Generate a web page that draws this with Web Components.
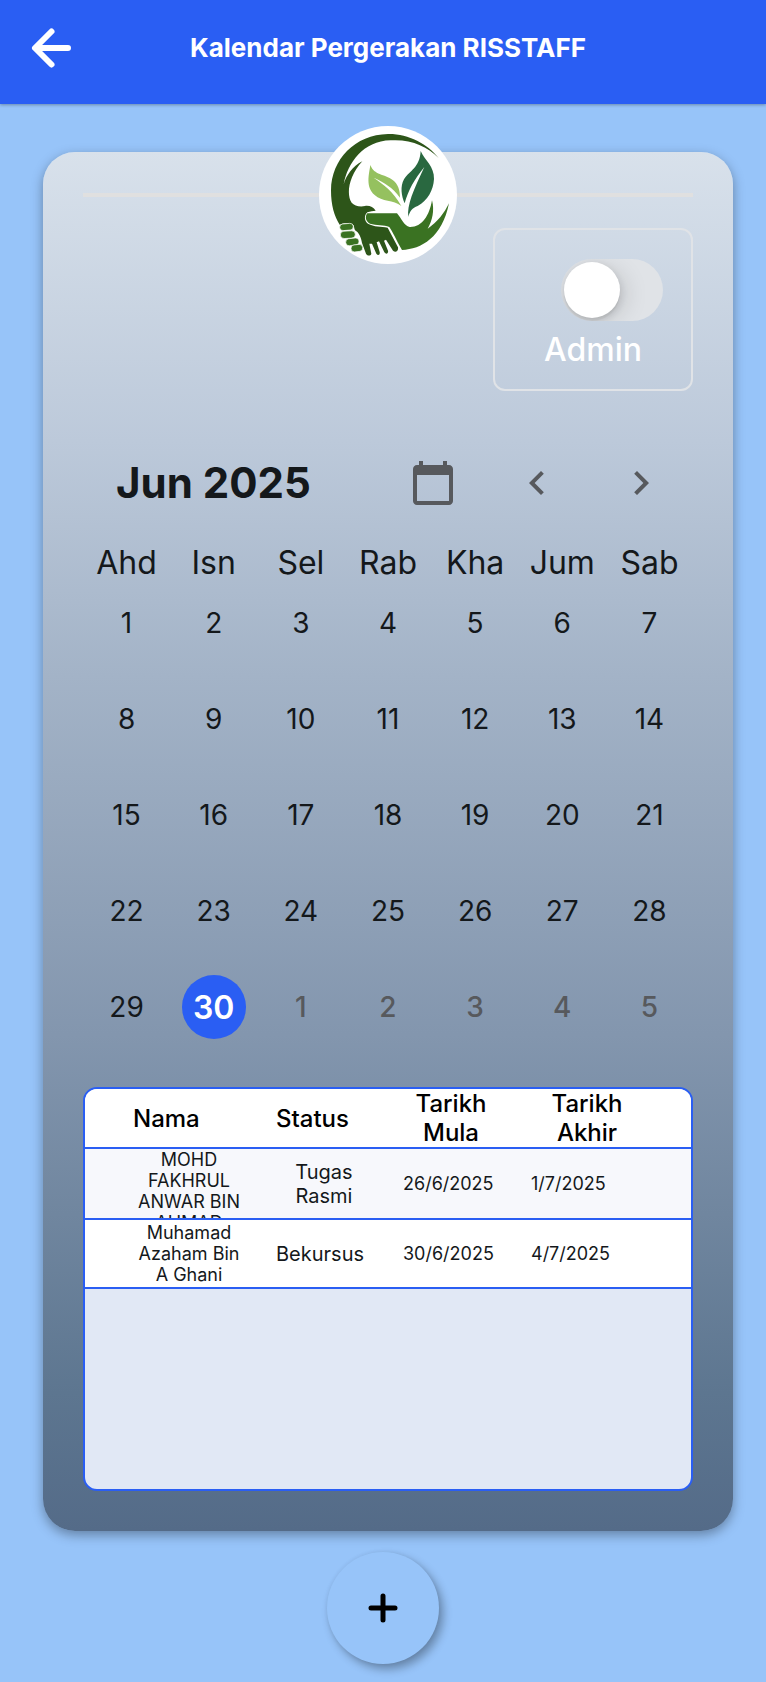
<!DOCTYPE html>
<html lang="ms">
<head>
<meta charset="utf-8">
<meta name="viewport" content="width=device-width, initial-scale=1">
<title>Kalendar Pergerakan RISSTAFF</title>
<style>
  :root {
    --primary: #2a5ef3;
    --sky: #97c4f9;
    --line: #e0e3e7;
    --ink: #14181b;
    --muted: #57595d;
  }
  body {
    margin: 0;
    min-height: 100vh;
    background: var(--sky);
    color: var(--ink);
    font-family: Inter, "Liberation Sans", sans-serif;
  }
</style>
</head>
<body>
<movement-page></movement-page>

<script>
const define = (name, html, setup) => {
  const template = document.createElement('template');
  template.innerHTML = html;
  customElements.define(name, class extends HTMLElement {
    constructor() {
      super();
      this.attachShadow({ mode: 'open' }).append(template.content.cloneNode(true));
    }
    connectedCallback() {
      if (setup) setup(this, this.shadowRoot);
    }
  });
};

define('top-bar', `
  <style>
    :host { display: block; background: var(--primary); box-shadow: 0 1px 3px rgba(0,0,0,.3); }
    header { display: grid; grid-template-columns: 72px 1fr 62px; align-items: center; height: 104px; padding: 0 16px 8px; box-sizing: border-box; }
    button { width: 72px; height: 72px; padding: 0; border: 0; background: none; display: grid; place-items: center; cursor: pointer; }
    h1 { margin: 0; text-align: center; color: #fff; font-size: 26px; line-height: 32px; font-weight: 700; }
  </style>
  <header>
    <button aria-label="Kembali">
      <svg width="44" height="44" viewBox="0 0 44 44" fill="none" stroke="#fff" stroke-width="6" stroke-linecap="round" stroke-linejoin="round"><path d="M38 22H6M21.500 5.500 5 22l16.500 16.500"/></svg>
    </button>
    <h1><slot></slot></h1>
  </header>`);

define('brand-logo', `
  <style>
    :host { display: flex; align-items: center; }
    i { flex: 1; height: 4px; background: #e0e0e0; }
    svg { display: block; flex: none; }
  </style>
  <i></i>
  <svg width="138" height="138" viewBox="57 47 414 414" role="img" aria-label="Logo">
    <circle cx="264" cy="254" r="207" fill="#fff"/>
    <path fill="#2d5519" d="M416 143C382 100 325 70 264 71C165 73 94 147 93 240C93 285 103 318 119 343C135 336 154 339 161 345C163 350 162 354 165 360C177 366 183 381 186 398L198 430C202 438 213 437 214 430L208 400L216 400L229 430C234 437 241 434 239 425L230 396L237 393L253 426C259 434 266 429 264 421L252 391L258 388L279 421C287 429 296 422 294 411L263 352C243 348 222 350 204 340C192 331 192 315 202 306C211 302 219 303 227 301C220 291 209 285 195 287C179 291 163 286 155 277C138 253 146 197 187 153C157 168 138 197 131 222C143 158 189 92 272 90C333 86 382 108 416 143Z"/>
    <path fill="#3a7222" d="M202 309C194 319 197 334 210 340C229 346 252 342 268 350C278 364 287 386 306 419C364 417 427 381 447 279C433 308 412 336 383 355C397 331 404 301 396 270C388 316 366 351 329 350C312 347 304 324 291 309Z"/>
    <g fill="#3a7222" stroke="#fff" stroke-width="2">
      <rect x="119" y="340" width="41" height="20" rx="10" transform="rotate(-5 139 350)"/>
      <rect x="121" y="362" width="45" height="22" rx="11" transform="rotate(-3 143 373)"/>
      <rect x="137" y="384" width="40" height="21" rx="10" transform="rotate(-7 157 394)"/>
      <rect x="153" y="403" width="35" height="21" rx="10" transform="rotate(-6 170 413)"/>
    </g>
    <path fill="#95c15f" d="M211 164C223 196 252 189 279 210C294 221 300 240 300 262C277 230 253 217 221 202C250 223 279 241 304 287C280 268 246 275 224 254C196 230 207 192 211 164Z"/>
    <path fill="#296840" d="M362 122C375 151 403 168 402 206C400 240 383 271 353 287C337 293 329 303 325 320C320 285 341 238 373 170C342 208 325 240 314 279C304 257 300 228 312 207C329 180 359 173 362 122Z"/>
  </svg>
  <i></i>`);

define('admin-toggle', `
  <style>
    :host { display: block; width: 200px; box-sizing: border-box; border: 2px solid var(--line); border-radius: 12px; padding: 29px 28px 19px; }
    label { display: grid; gap: 9px; color: #fff; font-size: 32px; line-height: 40px; font-weight: 500; text-align: center; }
    input { appearance: none; box-sizing: border-box; margin: 0; justify-self: end; width: 102px; height: 62px; border-radius: 31px; background: var(--line); padding: 3px; display: flex; overflow: hidden; }
    input::before { content: ""; width: 56px; height: 56px; border-radius: 50%; background: #fff; box-shadow: 0 3px 8px rgba(0,0,0,.15), 8px 4px 22px rgba(0,0,0,.1), 0 3px 1px rgba(0,0,0,.04); }
    input:checked { justify-content: flex-end; background: var(--primary); }
    span { display: block; }
  </style>
  <label><input type="checkbox" role="switch"><span><slot></slot></span></label>`);

define('month-calendar', `
  <style>
    :host { display: block; }
    button { font: inherit; color: inherit; padding: 0; border: 0; background: none; cursor: pointer; }
    .head { display: flex; align-items: center; height: 48px; padding: 0 28px 0 33px; }
    h2 { flex: 1; margin: 0; font-size: 42px; line-height: 48px; font-weight: 700; white-space: nowrap; }
    .tools { display: flex; gap: 56px; color: var(--muted); }
    .tools button, svg { display: block; width: 48px; height: 48px; }
    .grid { display: grid; grid-template-columns: repeat(7, 1fr); justify-items: center; }
    .names { margin-top: 37px; font-size: 32px; line-height: 38px; }
    .days { margin-top: 9px; row-gap: 32px; font-size: 28px; }
    .days button { width: 64px; height: 64px; border-radius: 50%; }
    .days .today { background: var(--primary); color: #fff; font-size: 32px; font-weight: 600; }
    .days .next { color: var(--muted); font-weight: 500; }
  </style>
  <div class="head">
    <h2>Jun 2025</h2>
    <div class="tools">
      <button aria-label="Hari ini"><svg viewBox="0 0 24 24" fill="currentColor"><path d="M20 3h-1V1h-2v2H7V1H5v2H4c-1.100 0-2 .9-2 2v16c0 1.100.9 2 2 2h16c1.100 0 2-.9 2-2V5c0-1.100-.9-2-2-2zm0 18H4V8h16v13z"/></svg></button>
      <button aria-label="Bulan sebelum"><svg viewBox="0 0 24 24" fill="currentColor"><path d="M15.410 7.410 14 6l-6 6 6 6 1.410-1.410L10.830 12z"/></svg></button>
      <button aria-label="Bulan berikut"><svg viewBox="0 0 24 24" fill="currentColor"><path d="M10 6 8.590 7.410 13.170 12l-4.580 4.590L10 18l6-6z"/></svg></button>
    </div>
  </div>
  <div class="grid names"></div>
  <div class="grid days"></div>`,
  (host, root) => {
    const add = (parent, tag, text, cls) => {
      const el = document.createElement(tag);
      el.textContent = text;
      if (cls) el.className = cls;
      root.querySelector(parent).append(el);
    };
    ['Ahd', 'Isn', 'Sel', 'Rab', 'Kha', 'Jum', 'Sab'].forEach(n => add('.names', 'span', n));
    for (let d = 1; d <= 30; d++) add('.days', 'button', d, d === 30 ? 'today' : '');
    for (let d = 1; d <= 5; d++) add('.days', 'button', d, 'next');
  });

define('movement-table', `
  <style>
    :host { display: block; box-sizing: border-box; min-height: 404px; border: 2px solid var(--primary); border-radius: 14px; background: #e1e8f5; overflow: hidden; }
    table { width: 100%; table-layout: fixed; border-spacing: 0; }
    col.name { width: 191px; } col.status { width: 127px; } col.start { width: 128px; }
    th, td { padding: 0; border-bottom: 2px solid var(--primary); font-weight: 400; background: #fff; }
    .odd td { background: #f7f8fc; }
    .box { display: flex; align-items: safe center; overflow: hidden; height: 67px; }
    .odd .box { height: 69px; }
    th .box { height: 58px; }
    span { text-align: center; font-size: 18px; line-height: 21px; max-width: 102px; }
    th span { color: #000; font-size: 24px; line-height: 29px; font-weight: 500; max-width: 96px; }
    th:last-child span { max-width: 112px; }
    td .status { font-size: 20px; line-height: 24px; max-width: 96px; }
    th:first-child .box { padding-left: 48px; }
    td:first-child .box { padding-left: 53px; }
  </style>
  <table>
    <colgroup><col class="name"><col class="status"><col class="start"><col></colgroup>
    <thead><tr>
      <th><div class="box"><span>Nama</span></div></th>
      <th><div class="box"><span>Status</span></div></th>
      <th><div class="box"><span>Tarikh Mula</span></div></th>
      <th><div class="box"><span>Tarikh Akhir</span></div></th>
    </tr></thead>
    <tbody>
      <tr class="odd">
        <td><div class="box"><span>MOHD FAKHRUL ANWAR BIN AHMAD</span></div></td>
        <td><div class="box"><span class="status">Tugas Rasmi</span></div></td>
        <td><div class="box"><span>26/6/2025</span></div></td>
        <td><div class="box"><span>1/7/2025</span></div></td>
      </tr>
      <tr>
        <td><div class="box"><span>Muhamad Azaham Bin A Ghani</span></div></td>
        <td><div class="box"><span class="status">Bekursus</span></div></td>
        <td><div class="box"><span>30/6/2025</span></div></td>
        <td><div class="box"><span>4/7/2025</span></div></td>
      </tr>
    </tbody>
  </table>`);

define('add-button', `
  <style>
    :host { display: block; width: 112px; height: 112px; }
    button { width: 112px; height: 112px; padding: 0; border: 0; border-radius: 50%; background: var(--sky); box-shadow: 4px 5px 10px rgba(0,0,0,.32), 0 0 4px rgba(0,0,0,.06); display: grid; place-items: center; cursor: pointer; }
  </style>
  <button aria-label="Tambah"><svg width="30" height="30" viewBox="0 0 30 30" stroke="#000" stroke-width="5" stroke-linecap="round"><path d="M15 3v24M3 15h24"/></svg></button>`);

define('movement-page', `
  <style>
    :host { display: block; }
    main { margin: 48px 33px 0 43px; padding: 0 40px 40px; border-radius: 32px; display: flow-root;
      background: linear-gradient(#d8e1eb, #bcc9da 21%, #a3b3c7 38%, #8396ae 64%, #5d7690 90%, #546b88);
      box-shadow: 0 4px 12px rgba(0,0,0,.34); }
    brand-logo { margin-top: -26px; }
    admin-toggle { margin: -36px 0 0 auto; }
    month-calendar { margin-top: 68px; }
    movement-table { margin-top: 48px; }
    add-button { margin: 21px auto 18px; }
  </style>
  <top-bar>Kalendar Pergerakan RISSTAFF</top-bar>
  <main>
    <brand-logo></brand-logo>
    <admin-toggle>Admin</admin-toggle>
    <month-calendar></month-calendar>
    <movement-table></movement-table>
  </main>
  <add-button></add-button>`);
</script>
</body>
</html>
